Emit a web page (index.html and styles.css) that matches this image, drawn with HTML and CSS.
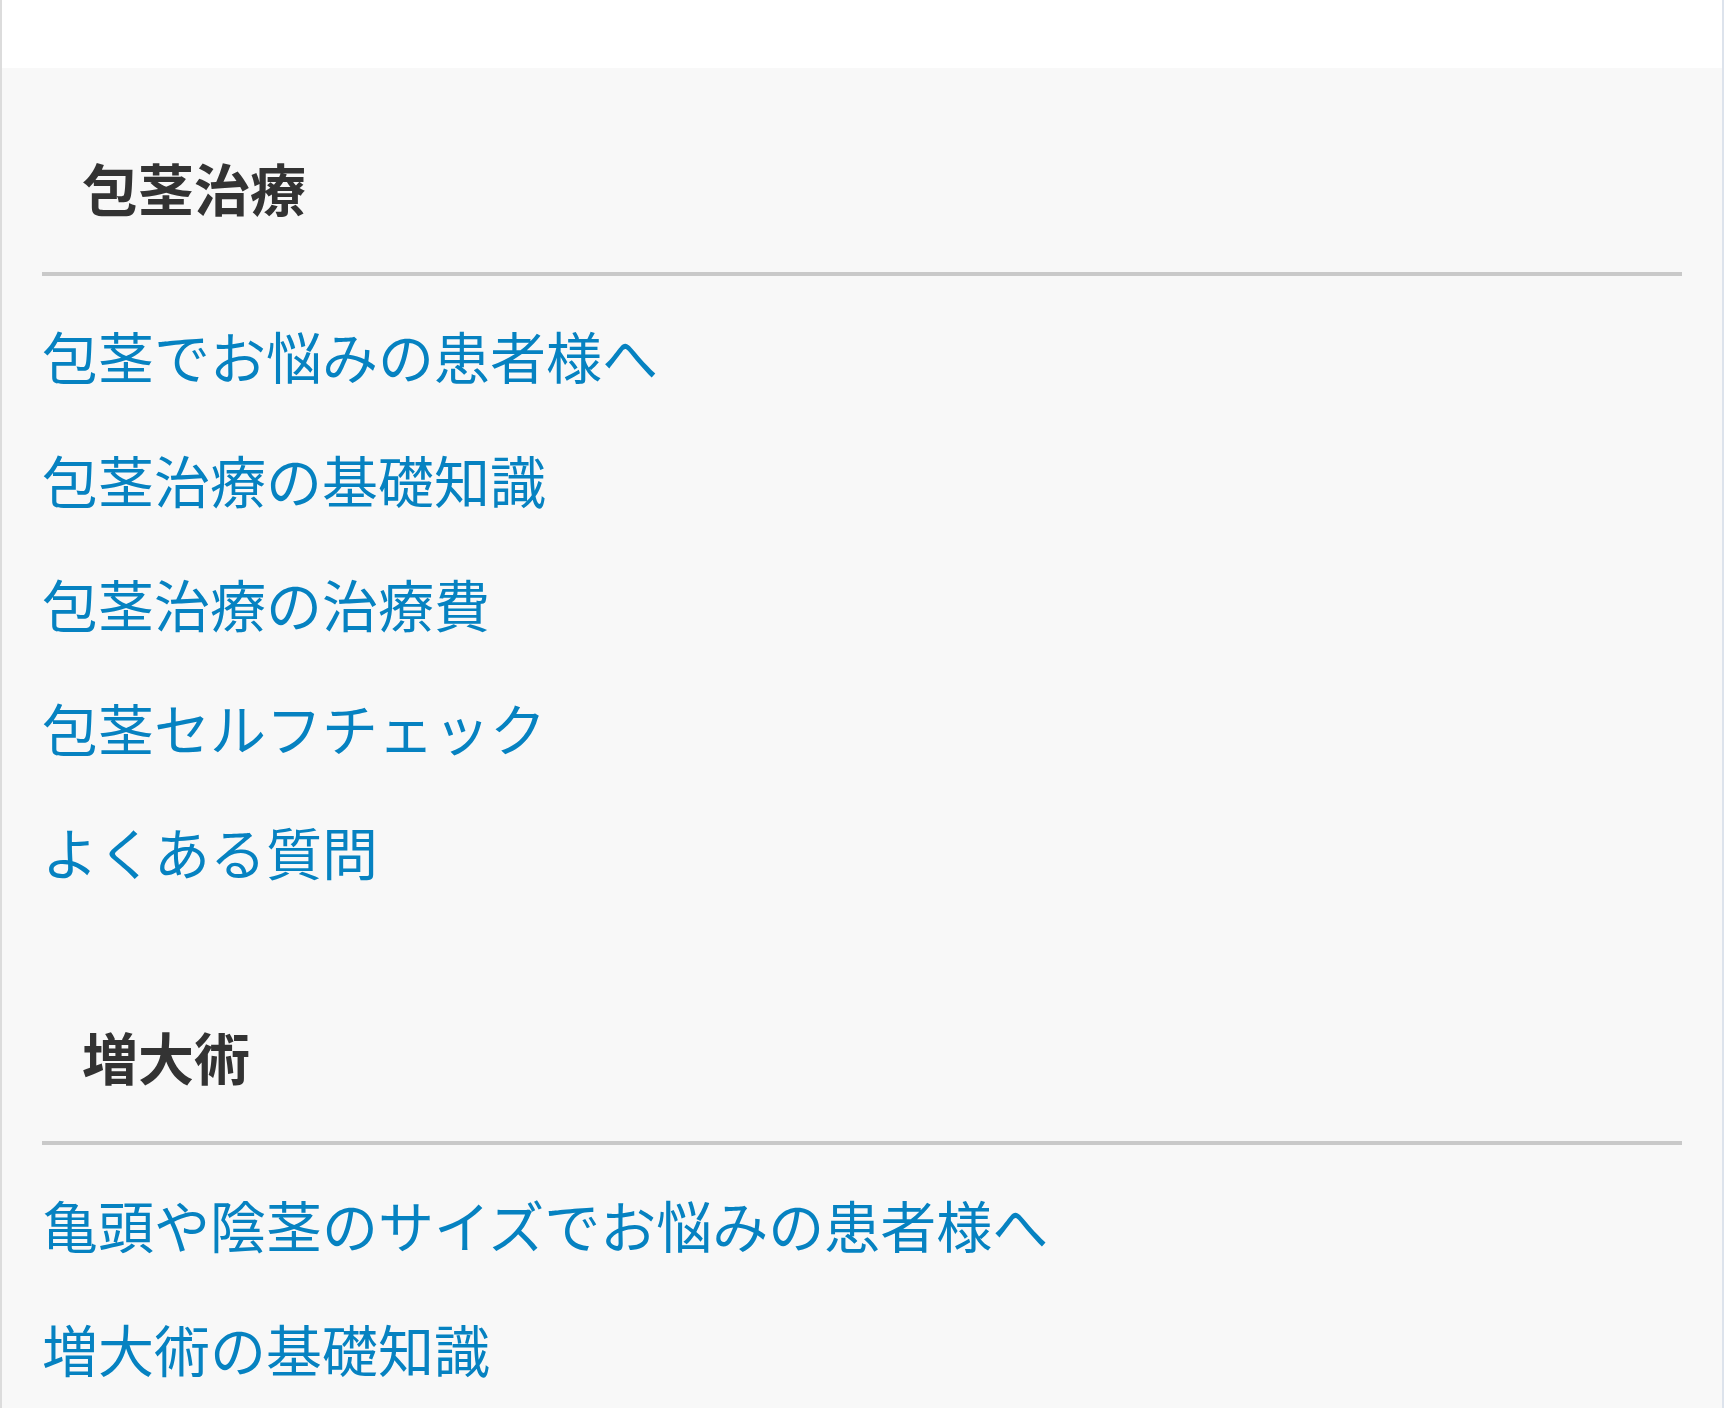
FILE: index.html
```html
<!DOCTYPE html>
<html lang="ja">

<head>
  <meta charset="UTF-8">
  <meta name="viewport" content="width=device-width, initial-scale=1.0">
  <title>包茎治療</title>
  <link rel="stylesheet" href="styles.css">
</head>

<body>
  <div class="page">
    <div class="page-top"></div>

    <aside class="side-menu">
      <section class="menu-block">
        <h2 class="menu-title">包茎治療</h2>
        <ul class="menu-list">
          <li><a href="#">包茎でお悩みの患者様へ</a></li>
          <li><a href="#">包茎治療の基礎知識</a></li>
          <li><a href="#">包茎治療の治療費</a></li>
          <li><a href="#">包茎セルフチェック</a></li>
          <li><a href="#">よくある質問</a></li>
        </ul>
      </section>

      <section class="menu-block">
        <h2 class="menu-title">増大術</h2>
        <ul class="menu-list">
          <li><a href="#">亀頭や陰茎のサイズでお悩みの患者様へ</a></li>
          <li><a href="#">増大術の基礎知識</a></li>
        </ul>
      </section>
    </aside>
  </div>
</body>

</html>
```

FILE: styles.css
```css
html,
body {
  margin: 0;
  padding: 0;
  background-color: #fff;
}

body {
  font-family: "Noto Sans CJK JP", "Noto Sans", sans-serif;
  color: #333;
}

.page {
  min-height: 1408px;
  border-left: 2px solid #dcdcdc;
  border-right: 2px solid #dde3ec;
  background-color: #f8f8f8;
}

/* empty white band above the menu */
.page-top {
  height: 68px;
  background-color: #fff;
}

.side-menu {
  padding: 91px 40px 0 40px;
}

.menu-block {
  margin-bottom: 149px;
}

.menu-title {
  margin: 0;
  padding: 0 0 57px 40px;
  font-size: 56px;
  line-height: 56px;
  font-weight: 700;
  color: #333;
  border-bottom: 4px solid #c9c9c9;
}

.menu-list {
  list-style-type: none;
  margin: 51px 0 0 0;
  padding: 0;
  display: flex;
  flex-direction: column;
  gap: 68px;
}

.menu-list li {
  font-size: 56px;
  line-height: 56px;
}

.menu-list a {
  color: #0682c1;
  text-decoration: none;
}
```
